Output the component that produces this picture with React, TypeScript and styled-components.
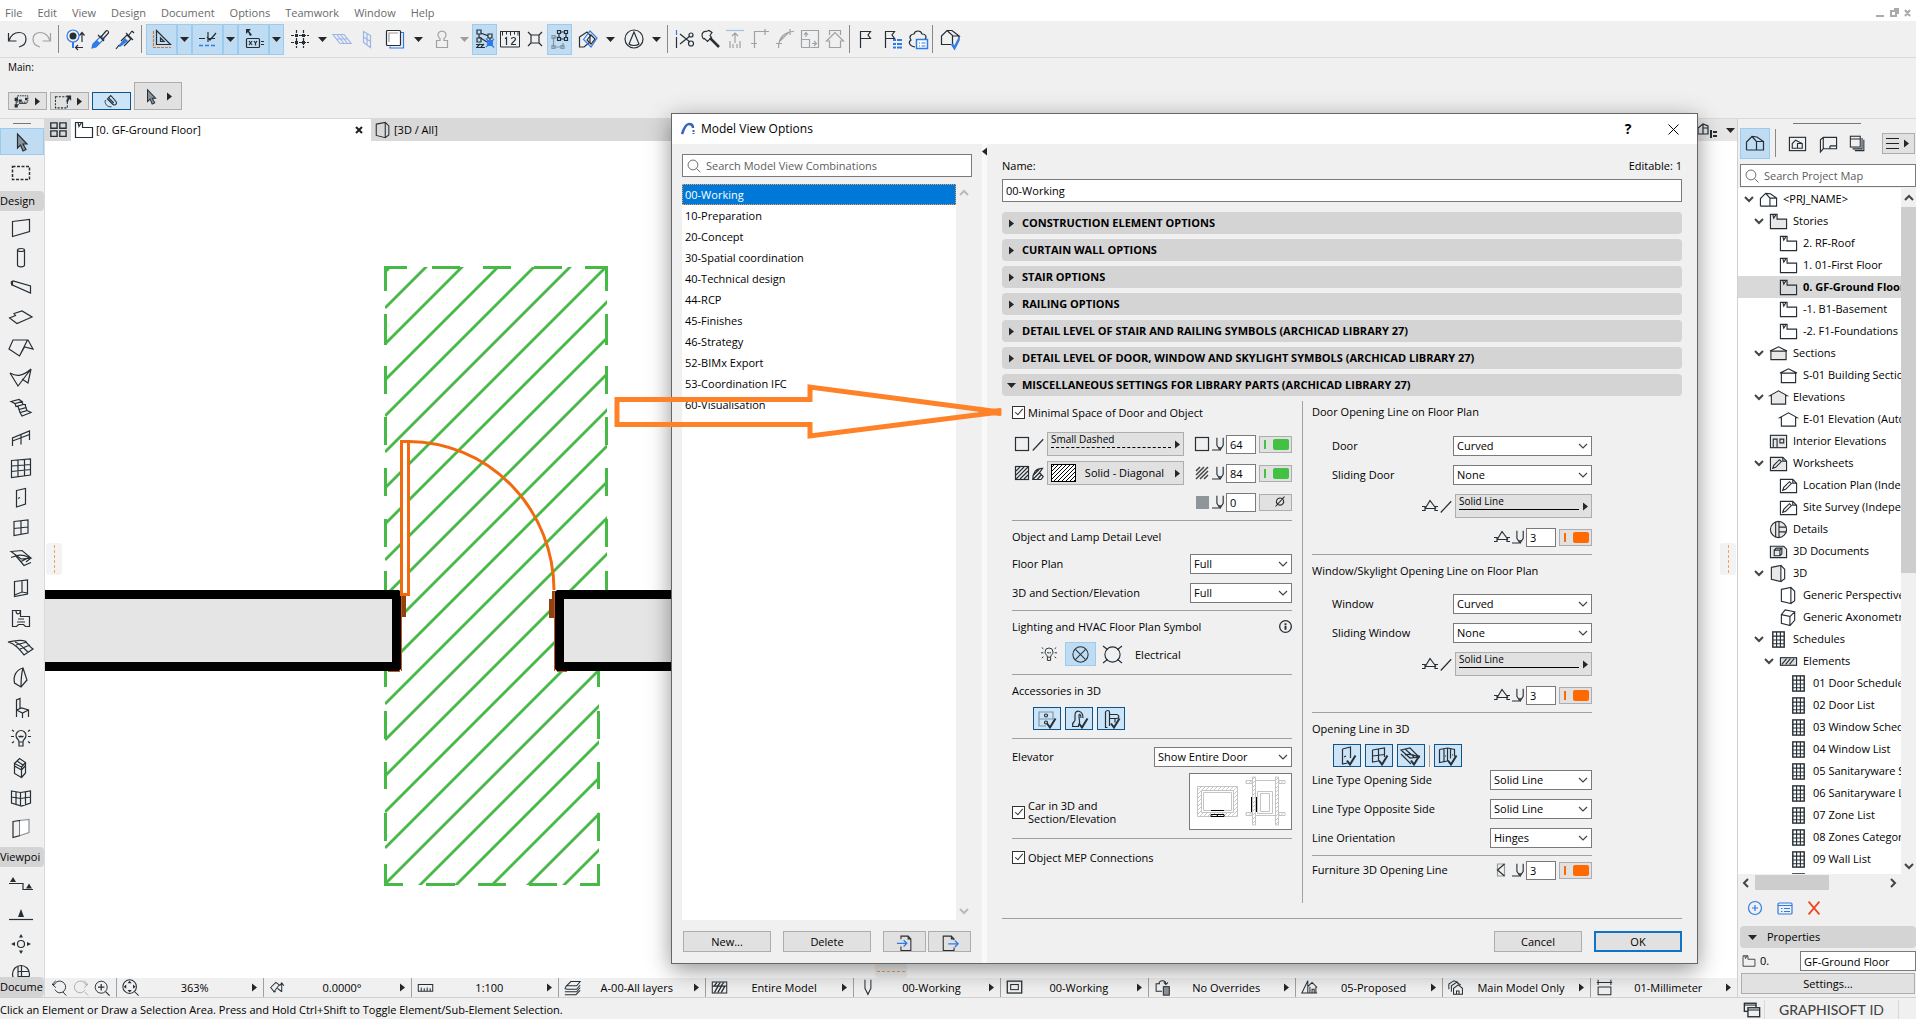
import React, { ReactNode } from 'react';
import styled, { createGlobalStyle, css } from 'styled-components';

const ink = '#262f36';
const blue = '#2f7bea';
const line = '#a0a0a0';
const orange = '#ff6a00';
const green = '#42c142';
const face = '#f0f0f0';

const Global = createGlobalStyle`
  *, *::before, *::after { box-sizing: border-box; }
  body { margin: 0; overflow: hidden; background: ${face}; }
  body, button, input, select {
    font-family: "Open Sans", "Noto Sans", sans-serif;
    font-size: 11px;
    line-height: 16px;
    color: #000;
  }
  button, input, select { margin: 0; padding: 0; border-radius: 0; }
  ul { margin: 0; padding: 0; list-style: none; }
  svg { display: block; flex: none; }
`;

/* ---------- icons: 20 x 20 line drawings ---------- */

const F = (d: string, c = 'currentColor') => <path d={d} fill={c} stroke="none" />;
const P = (d: string, c?: string, w?: number) => <path d={d} stroke={c} strokeWidth={w} />;
const check = P('M10 14.5l3 4 5.500-9', ink, 2);

const icons: Record<string, ReactNode> = {
  undo: P('M1.500 4v8h8M2 11.500C4 6 8 3.500 12 3.500c4 0 7 2.500 7 6.500 0 4-3 7-7 8'),
  redo: P('M18.500 4v8h-8M18 11.500C16 6 12 3.500 8 3.500c-4 0-7 2.500-7 6.500 0 4 3 7 7 8'),
  find: <><circle cx="8" cy="7" r="6" stroke={blue} /><circle cx="8" cy="7" r="3.500" fill={ink} stroke="none" />{P('M8 13v6', blue, 2)}{P('M17 13V4M14.500 6.500L17 3.500l2.500 3M18 18.500h-7M13 16l-2.500 2.500L13 21')}</>,
  dropper: <>{P('M2 19l1-4 8-8 3 3-8 8z', blue)}{F('M2 19l1-4 4-4 3 3-4 4z', blue)}{P('M8 6l6 6M11 8l5-6c1-1 3 0 2.500 2L13 10')}</>,
  syringe: <>{F('M3 17l7-8 3 3-8 6z', blue)}{P('M1 20l3-4M6 12l6-6 4 4-7 7M11 4l7 7M14 6l3-4M17 2l2 2')}</>,
  triangle: <>{P('M4.500 1.500v14h14z')}{P('M8.500 9v3.500H12z')}{P('M1.500 1v17.500H19', '#d9772b')}<path d="M1.500 1v17.500H19" stroke="#bfdcf3" strokeDasharray="1 3" /></>,
  snap: <>{P('M1 9.500h6M10 3v10M10 9.500h7M9 8l3 3 6-7')}<path d="M1 16.500h17" stroke={blue} strokeDasharray="4 2" strokeWidth="1.500" /></>,
  coords: <>{F('M2 0h5L5 2l3 4-2 1-2-4-2 2z')}<rect x="2.500" y="9.500" width="13" height="9" rx="1" />{P('M5 12l3 4M8 12l-3 4M10 12l1.500 2 1.500-2M11.500 14v2.500M17 12.500h3M17 15.500h3')}</>,
  grid: <><path d="M6.500 1v18M13.500 1v18M1 6.500h18M1 13.500h18" strokeDasharray="3 1" /><path d="M5 5h3v3H5zM12 5h3v3h-3zM5 12h3v3H5zM12 12h3v3h-3z" fill={ink} stroke="none" /></>,
  plane: P('M1 5.500h11l7 9H8zM4.500 10h11M5 5.500l7 9M8.500 5.500l7 9'),
  planeV: P('M6.500 2.500l7 4v12l-7-5zM10 4.500v12M6.500 8l7 4.500'),
  layers: <>{P('M5 17.500v1.500h13.500V3.500h-3', blue)}<rect x="1.500" y="1.500" width="14" height="15" rx="1" fill="#fff" /><path d="M4 13V4h9" stroke="#999" /></>,
  pawn: P('M8 9.500a4 4 0 1 1 4 0v2h3.500v7h-11v-7H8z'),
  suspend: <>{P('M4 2.500v9M4 3.500l11 4v4M4 8l8 5')}<path d="M2 1h4v4H2zM13 5h4v4h-4zM2 9h4v4H2z" fill="#bfdcf3" />{P('M1 18.500h9M1 15.500h8M2 18l3-3M6 18l3-3')}<path d="M12 11h6v6h-6z" fill={blue} stroke="none" />{P('M11 9.500l8 9M19 10l-8 8', blue)}</>,
  ruler: <><path d="M0 2.500h20M2.500 2.500v4M6.500 2.500v3M10.500 2.500v4M14.500 2.500v3M18 2.500v4M0.500 2v16h19V2" strokeWidth="1" />{P('M5 9.500l1.500-1v7.500M11.500 10c0-2 4-2 4 0 0 2-4 3.500-4 5.500h4.500')}</>,
  xbox: <>{P('M3 3l3 3M17 3l-3 3M3 17l3-3M17 17l-3-3M6 6h8v8H6z')}</>,
  group: <><path d="M3.500 8v10h10M3.500 8h4M13 18v-4" stroke="#7d97a8" /><path d="M2 6.500h3v3H2zM2 16.500h3v3H2zM11 16.500h3v3h-3z" stroke="#7d97a8" />{P('M9 3h7v7H9z')}<path d="M7.500 1.500h3v3h-3zM14.500 1.500h3v3h-3zM7.500 8.500h3v3h-3zM14.500 8.500h3v3h-3z" fill="#bfdcf3" /></>,
  house3d: <>{P('M1.500 8L9 3l3 3v7l-6 5H1.500z')}{P('M5.500 10.500L12 2l7 7-6 9z', blue)}{P('M9 11l4-5 4 4-4 5z')}</>,
  cone: <><circle cx="10" cy="10" r="9" />{P('M10 3l-5 12c2 2 8 2 10 0z')}</>,
  cut: <>{P('M2.500 1v5', blue)}{P('M2.500 8v11M6 5l10 8M6 15l10-8')}<circle cx="17" cy="6" r="2" /><circle cx="17" cy="14.500" r="2.500" /></>,
  axe: <>{P('M2 6c0-2 2-4 4-3.500l3-1 3 2-2 3 1.500 2-4 4-3-3c-1 1-2 0-2.500-3.500z')}{P('M10 9l9 9', ink, 2.500)}</>,
  extend: <>{P('M1 1.500h18', '#3f7ad6')}{P('M10 14V4M7 7l3-3 3 3M5 12v7M8 15v4M12 15v4M15 12v7')}</>,
  corner: P('M4.500 19V2.500H19M15 0v6M1 14.500h6'),
  fillet: P('M3.500 19C3.500 9 9 2.500 19 2.500M15 0v6M1 14.500h6M5 12l9-9'),
  resize: P('M1.500 18.500v-17h17v17h-8M1.500 10.500h8v8h-8M6 8V4M4 6l2-2.500L8 6M12 14.500h4M14 12l2.500 2.500L14 17'),
  homeUp: P('M4.500 6V1.500h11V6M1.500 12L10 3.500l8.500 8.500h-3v6.500h-11V12z'),
  flag: P('M4.500 19V2.500h10l-2.500 3.500 2.500 3.500h-10'),
  flagList: <>{P('M2.500 19V2.500h9l-2.500 3.500 2.500 3.500h-9')}<path d="M10 10h3v2h-3zM14 10h5v2h-5zM10 14h3v2h-3zM14 14h5v2h-5zM10 17.500h3v2h-3zM14 17.500h5v2h-5z" fill={blue} stroke="none" /></>,
  cloud: <>{P('M7 18C1 17 0 13 3 11 0 7 4 5 6 5c1-4 7-4 8 0 4 0 5 3 3 5')}<path d="M8.500 10.500h11v9h-11z" fill="#fff" stroke={blue} strokeWidth="1.500" />{P('M11 14h1M13.500 14h4M11 17h1M13.500 17h4', blue)}</>,
  homeCheck: <>{P('M11.500 15.500h-10V7L7 1.500l5 0 7 5.500h-6L7 1.500M12.500 7v8M19 7v3')}{P('M12 15l2.500 4L19 10', blue, 2.500)}</>,
  home: P('M1.500 17V9L7 3.500l5 .5 6.500 4.500V17h-17M11.500 17V8.500L7 3.500M11.500 8.500h7'),
  homeFrame: <><rect x="1.500" y="3.500" width="17" height="14" />{P('M4.500 15v-5L8 6.500l7 3.500v5zM10 15v-5h5')}</>,
  layout: P('M4.500 15.500h14v-12h-14L1.500 6v13l3-3.500v-12M11.500 12.500h7M11.500 12.500v3'),
  publish: <><rect x="1.500" y="2.500" width="11" height="12" />{P('M1.500 5.500h11M4 16.500h10.500v-12M6.500 18.500h10v-12')}</>,
  views: <><path d="M2 2h7v6H2zM12 2h7v6h-7zM2 11h7v6H2zM12 11h7v6h-7z" strokeWidth="1.500" /></>,
  story: <>{P('M1.500 2.500h7v5h10v10h-17z')}{P('M4 2.500l1 4 2.500-4')}</>,
  storyG: <><path d="M1.500 2.500h7v5h10v10h-17z" fill="#e8e8e8" />{P('M4 2.500l1 4 2.500-4')}</>,
  box3d: P('M2.500 3.500l10-2v17l-10-2.500zM12.500 1.500l4 4v10l-4 3'),
  box3dG: <><path d="M2.500 3.500l10-2v17l-10-2.500z" fill="#e8e8e8" />{P('M12.500 1.500l4 4v10l-4 3')}</>,
  boxAxo: P('M2.500 7l9 2v9.500l-9-2.500zM2.500 7l4-5 10 2-5 5M16.500 4v9l-5 5.500'),
  arrow: <path d="M6.500 2v14l3-3 2.500 6 3-1.500-3-5.500h4z" fill="#8b9299" />,
  marquee: <rect x="1.500" y="3.500" width="17" height="13" strokeDasharray="3 1.500" strokeWidth="1.500" />,
  wall: P('M1.500 3.500l17-2v12l-17 5z'),
  column: <><ellipse cx="10" cy="2" rx="3.500" ry="1.500" />{P('M6.500 2v15c0 2.500 7 2.500 7 0V2')}</>,
  beam: P('M0 4l2-1 17.500 5v7L1.500 7V3.500M0 4l1 3.500'),
  slab: P('M-1.500 10l6-2.500-1.500-2 8-2.500 10 6-15 6.500z'),
  roof: P('M-2 11l4-9h15l5 9-8.500-2-5 9zM16.500 2L8.500 18'),
  shell: P('M-1 5c7 4 13 3 21-4L7 18zM20 1l-3 14-6-4'),
  stair: P('M0 3.500l8-2 3 2-7 2zM4 5.500l1 3 7-2-1-3M5 8.500l3 0M12 6.500l3 0-1 0 1 3-7 2-1-3M15 9.500l1 3-7 2-1-3M16 12.500l4 2-9 3.500-2-3.500'),
  railing: P('M1.500 18v-8l17-7v9M1.500 13l17-6.500M10 6.500v10'),
  cwall: P('M0.500 2.500l19-1.500v16l-19 2.500zM7 2v16.500M13.500 1.500V18M0.500 8l19-1.500M0.500 13.500l19-2'),
  door: <>{P('M5.500 2.500l9-2v15.500l-9 3z')}{P('M7 10.500l2-1')}</>,
  window: P('M3 3.500l14-1.500v13l-14 2.500zM10 3v14M3 10.500l14-1.500'),
  skylight: P('M0 3.500l11-1L20 10l-10 1zM0 9.500c6-2 10-4 18-0l-8 4M5 8l8 9.500 7-3M20 10l-5 4'),
  opening: P('M3.500 3.500l13-1.500v14l-13 2.500zM11 3v11M3.500 17l7.500-3 5.500 1'),
  zone: P('M1.500 18.500v-16h8v6h9v10h-4l-2-2h-5l-2 2zM5 2.500c0 5 4 4 4.500 0M7 11h6M6 14h8'),
  mesh: P('M-3 4c7-1 12-3 17-1 3 3 5 6 8 8l-9 6C9 12 5 6-3 4zM5 7l11-3M9 11l10-4M4 4c6 2 9 7 13 10'),
  morph: P('M3.500 15C2 8 5 2 12 0l4 12-6 7zM12 0c-2 7-2 12-2 19M3.500 15l6.500 4'),
  chair: P('M5.500 19V2l3.500-1.500v10M5.500 12l5-2 7 2v7M5.500 12l6 3 6-3M11.500 15v5'),
  lamp: <>{P('M8 14c0-3-3-3-3-6.500a5 5 0 0 1 10 0C15 11 12 11 12 14zM8 14v4h4v-4M7.500 8l1.500 1 1-1 1 1 1.500-1')}{P('M1 2l2 1.500M0 8.500h3M1 15l2-1.500M19 2l-2 1.500M20 8.500h-3M19 15l-2-1.500')}</>,
  equip: P('M3.500 5.500l7 3.500v10.500l-7-4zM3.500 5.500l5-5 6 4-4 4.500M14.500 4.500V15l-4 4.500M3.500 8l7 4 4-4.500M6 3l6 4'),
  cwall2: P('M0.500 3l9 1.500 10-1.500v12l-9 3-10-3zM9.500 4.500V18M5 4v13M14.500 4v13M0.500 9l9 1.500 10-1.500'),
  panel: <>{P('M2 3.500l7-1v15l-7 2z')}<path d="M9 2.500l9-1v13l-9 3" stroke="#8b9299" fill="#fff" /></>,
  level: <>{P('M-2 9.500h14v6h10')}{F('M-1 8L2 3l3 5zM15 14.500l3-5 3 5z')}</>,
  section: <>{P('M-2 15.500h24')}{F('M7 13l3-8 3 8z')}</>,
  elev4: <><circle cx="10" cy="10" r="3.500" />{F('M8 3.500L10 0l2 3.500zM8 16.500L10 20l2-3.500zM4 8L0 10l4 2zM16 8L20 10l-4 2z')}</>,
  detail: <><circle cx="10" cy="10" r="8.500" />{P('M7 2v16M10.500 1.500v17M7 7.500h11M7 12.500h11')}</>,
  zoomBack: P('M6 1L1.500 5.500l4.500 4M1.500 5.500h3C6 2 9 1 12 1.500c9 2 8 14-1 14.500-3 0-5-2-6-4M15 15l4 4.500'),
  zoomFwd: P('M14 1l4.500 4.500-4.500 4M18.500 5.500h-3C14 2 11 1 8 1.500-1 3.500 0 15.500 9 16c3 0 5-2 6-4M15 15l4 4.500'),
  zoomIn: <><circle cx="9" cy="9" r="7.500" />{P('M14.500 14.500l5 5M9 5v8M5 9h8', undefined, 1.500)}</>,
  zoomFit: <><circle cx="9" cy="9" r="8" />{P('M15 15l4.500 4.500')}{F('M9 2l2.500 3h-5zM9 16l2.500-3h-5zM2 9l3-2.500v5zM16 9l-3-2.500v5z')}</>,
  rotate: P('M2 10l6-6 4 3-6 8zM5 15h3M15 15V5M12.500 8L15 4.500 17.500 8M10 11l5 4'),
  scale: P('M1.500 6.500h17v8h-17zM5 14v-4M8.500 14v-3M12 14v-4M15.500 14v-3'),
  stack: P('M3 8l5-5h11l-4 5zM1 11.500l3 .5h11l4-5M1 15h14l4-5M1 18.500h13l5-5M1 11.500L3 8'),
  model: <><rect x="1.500" y="3.500" width="17" height="13" /><path d="M1.500 8.500h17M4 8l3-4M8 8l3-4M12 8l3-4M4 16l4-7M8 16l4-7M12 16l4-7" strokeWidth="1.500" /></>,
  pen: P('M7 1v10l3.500 7 3.500-7V1M10.500 16v3'),
  frame: <><rect x="1.500" y="2.500" width="17" height="14" strokeWidth="1.500" /><rect x="5.500" y="6.500" width="9" height="6" /></>,
  override: <>{P('M7 5.500H2.500v9h7M6 5c0-4 8-4 8 1M11.500 4L14 6.500 16.500 4')}<rect x="11" y="9" width="7" height="10" fill="#8b9299" /></>,
  reno: P('M1 16.500L8 2v14.500zM8 9l5-5 6 6M10.500 16.500V9M17.500 16.500V9M8 16.500h11M13 16v-4h2.500v4'),
  homes: P('M6.500 18V11L12 7l5 4v7zM10 18v-4h3v4M4 15V8l6-4 5 3M1 12V6l6-4 5 2'),
  dims: P('M2.500 1v6M17.500 1v6M1 4h18M2.500 9.500h15v9h-15z'),
  quick: <>{P('M0 14V8l5-4 5 2v8zM5 14V8h5M5 8V4')}{P('M13 10v8M15 12h4M15 16h4', ink, 2)}</>,
  secG: <><path d="M2 7.500h16v9H2z" fill="#e8e8e8" />{P('M1 7.500L10 3l9 4.500')}</>,
  sec: <>{P('M2.500 7.500h15v10h-15zM1 7.500L10 3l9 4.500')}</>,
  elG: <path d="M2.500 17v-9L1 8l9-5 9 5-1.500 0v9z" fill="#e8e8e8" />,
  el: <path d="M2.500 17v-9L1 8l9-5 9 5-1.500 0v9z" fill="#fff" />,
  intEl: <><rect x="1.500" y="3.500" width="17" height="13" fill="#e8e8e8" />{P('M4.500 16V7.500h4V16M11.500 7.500h4v4h-4z')}</>,
  workG: <><path d="M1.500 3.500h13l4 4v10h-17z" fill="#e8e8e8" />{P('M14.500 3.500v4h4M4 15l1-3 6-6 2 2-6 6z')}</>,
  work: <>{P('M1.500 3.500h13l4 4v10h-17zM14.500 3.500v4h4M4 15l1-3 6-6 2 2-6 6z')}</>,
  details: <><circle cx="10" cy="10" r="8.500" fill="#e8e8e8" />{P('M7 2v16M10.500 1.500v17M10.500 7.500h8M10.500 12.500h8')}</>,
  doc3d: <><path d="M1.500 4.500h14l3 3v9h-17z" fill="#e8e8e8" />{P('M5.500 8.500h6v6h-6zM5.500 8.500l2-2h6l-2 2M13.500 6.500v6l-2 2')}</>,
  table: <><rect x="4" y="2" width="12" height="16" strokeWidth="1.500" />{P('M8 2v16M12 2v16M4 6.500h12M4 10.500h12M4 14.500h12')}</>,
  elements: <><rect x="1.500" y="6" width="17" height="8" fill="#ddd" />{P('M3 13l5-6M7 13l5-6M11 13l5-6')}</>,
  plus: <><circle cx="10" cy="10" r="6.500" />{P('M10 7v6M7 10h6')}</>,
  list: <><rect x="3" y="5" width="14" height="11" rx="1" />{P('M3 7.500h14M6 10.500h1.500M9 10.500h6M6 13.500h1.500M9 13.500h6')}</>,
  cross: P('M4 3l12 14M16 3L4 17', undefined, 2),
  glass: <><circle cx="8.500" cy="8.500" r="7" />{P('M13.500 13.500l5.500 5.500')}</>,
  importI: <>{P('M5.500 7V3.500h8l3 3v13h-11V15M13.500 3.500v3h3')}{P('M1 11.500h11M8.500 8l3.500 3.500L8.500 15', blue, 1.500)}</>,
  exportI: <>{P('M14.500 8V6.500l-3-3h-9v16h12V16M11.500 3.500v3h3')}{P('M8 12h11M15.500 8.500L19 12l-3.500 3.500', blue, 1.500)}</>,
  square: <rect x="3.500" y="3.500" width="13" height="13" />,
  slash: P('M1 18L15 3', undefined, 1.6),
  hatchSq: <><rect x="3.500" y="3.500" width="13" height="13" />{P('M4 8l4-4M4 12l8-8M4 16L16 4M8 16l8-8M12 16l4-4')}</>,
  hatchQ: P('M1 18C1 9 5 3 14 3l-4 6 5 5-3 4zM1 13l9-9M2 17l9-9M7 18l5-6', undefined, 1.6),
  hatch: P('M4 8l4-4M4 12l8-8M4 16L16 4M8 16l8-8M12 16l4-4', '#444', 1.5),
  solid: <rect x="4" y="4" width="13" height="13" fill="#8f969b" stroke="none" />,
  penLine: P('M7 1v11l4.500 7 4.500-7V1M9 15.500h5M0 18.500h10', undefined, 1.6),
  swing: P('M2 10.500h3v4H2M5 12.500h11M5.500 12L10 4.500l6 8M18 10.500h-3v4h3'),
  fold: <><path d="M5.500 4h7v12h-7z" stroke="#999" />{P('M12.500 4l-7 6 7 6')}</>,
  crossCircle: <><circle cx="10" cy="10" r="9" />{P('M4 4l12 12M16 4L4 16')}</>,
  circleRays: <><circle cx="10" cy="10" r="8" />{P('M0 1l5 4M20 1l-5 4M0 19l5-4M20 19l-5-4')}</>,
  info: <><circle cx="10" cy="10" r="9" strokeWidth="2" />{P('M10 9v6M10 5v2.500', undefined, 3)}</>,
  cabinet: <><path d="M2 3h14v7H2zM2 10v7h7" stroke="#7d97a8" /><circle cx="9" cy="6.500" r="1.500" /><circle cx="9" cy="13.500" r="1.500" />{check}</>,
  tap: <>{P('M4 17c-2-3 2-4 2-6V6c0-6 8-5 8 3M9 17c3-2 1-6 1-10 0-3 2-2 2 2M3 17.500h7')}{check}</>,
  roll: <>{P('M6.500 18.500h-2V3c1-2 4-2 4 0v14M8 5.500h8c3 1 2 4 0 4H8M14 9.500v4')}{check}</>,
  doorC: <>{P('M5.500 3l8-2v11M5.500 3v15l5-1M7 11l2-1')}{check}</>,
  windowC: <>{P('M3.500 4l12-2v9M3.500 4v12l6-1M9.500 3v12M3.500 10l12-1.500')}{check}</>,
  skyC: <>{P('M0 4l9-2 9 9-9 1zM4 9c5-2 9 0 14 2M0 8l10 10M4 3l9 8')}{check}</>,
  gateC: <>{P('M1.500 3.500l8-1.500 7 1.500v7M1.500 3.500v13l8-1.500M6 3v13M12.500 2.500v10M9.500 2V15M7 10h1M14 9h1')}{check}</>,
  empty: P('M5 15L15 4M10 5.500a4 4 0 1 0 .1 0'),
  magnet: <><path d="M4 6l8 8c3 2 6-1 4-4L9 2 6 5l7 7" strokeWidth="1.500" />{P('M2 8c-2 4 2 10 8 9')}</>,
  nodes: <>{P('M4 8v9l4-4h9')}<rect x="5.500" y="3.500" width="13" height="8" strokeDasharray="2 1" />{F('M2 6h4v4H2zM2 14h4v4H2zM15 6h3v3h-3zM7 8h4v3H7z')}</>,
  marqueeSel: <><rect x="0.500" y="4.500" width="14" height="13" strokeDasharray="2.500 1.500" />{F('M13 3h6v6l-2-2-2 4-2-1 2-4z')}</>,
  windows: <><rect x="1.500" y="2.500" width="13" height="9" strokeWidth="1.500" />{P('M1.500 4.500h13')}<rect x="5.500" y="7.500" width="13" height="10" fill={face} strokeWidth="1.500" />{P('M5.500 10h13')}</>,
};

type IconProps = { n: string; s?: number; c?: string };
const Icon = ({ n, s = 20, c = ink }: IconProps) => (
  <svg width={s} height={s} viewBox="0 0 20 20" fill="none" stroke="currentColor" strokeWidth={1.2} color={c} overflow="visible" aria-hidden>
    {icons[n]}
  </svg>
);

type Dir = 'right' | 'down' | 'left';
const Tri = ({ dir = 'right' }: { dir?: Dir }) => (
  <svg width="9" height="9" viewBox="0 0 9 9" fill="#262626" aria-hidden>
    <path d={dir === 'right' ? 'M2 0.500L7 4.500 2 8.500z' : dir === 'down' ? 'M0 2h9L4.500 7z' : 'M7 0.500L2 4.500 7 8.500z'} />
  </svg>
);
const Chevron = ({ dir = 'down', c = '#444', w = 1.2 }: { dir?: 'down' | 'up' | 'left' | 'right'; c?: string; w?: number }) => (
  <svg width="10" height="10" viewBox="0 0 10 10" fill="none" stroke={c} strokeWidth={w} aria-hidden>
    <path d={{ down: 'M1 3l4 4 4-4', up: 'M1 7l4-4 4 4', left: 'M7 1L3 5l4 4', right: 'M3 1l4 4-4 4' }[dir]} />
  </svg>
);

/* ---------- frame ---------- */

const Page = styled.div`
  height: 100vh;
  display: flex;
  flex-direction: column;
  overflow: hidden;
`;
const MenuBar = styled.nav`
  height: 21px;
  background: #fff;
  display: flex;
  align-items: center;
  padding: 5px 4px 0 5px;
  gap: 15px;
`;
const MenuItem = styled.button`
  border: 0;
  background: none;
  color: #6a6a6a;
`;
const WinControls = styled.div`
  margin-left: auto;
  display: flex;
`;
const ToolBar = styled.div`
  height: 37px;
  padding: 0 4px;
  display: flex;
  align-items: center;
  border-bottom: 1px solid #d9d9d9;
`;
const Tool = styled.button<{ $w?: number; $on?: boolean; $dim?: boolean }>`
  width: ${(p) => p.$w ?? 25}px;
  height: 31px;
  flex: none;
  display: flex;
  align-items: center;
  justify-content: center;
  border: 1px solid ${(p) => (p.$on ? '#9ccbee' : 'transparent')};
  background: ${(p) => (p.$on ? '#bfdcf3' : 'transparent')};
  opacity: ${(p) => (p.$dim ? 0.4 : 1)};
`;
const ToolSep = styled.span<{ $w: number }>`
  width: ${(p) => p.$w}px;
  height: 28px;
  flex: none;
  display: flex;
  justify-content: center;
  &::after { content: ''; width: 1px; background: #888; }
`;
const InfoBox = styled.div`
  height: 61px;
  display: flex;
  flex-direction: column;
  justify-content: space-between;
  padding: 2px 0 8px 8px;
  border-bottom: 1px solid #d9d9d9;
`;
const Tiny = styled.span`
  font-size: 10px;
  line-height: 14px;
`;
const InfoTools = styled.div`
  display: flex;
  align-items: flex-end;
  gap: 3px;
`;
const InfoTool = styled.button<{ $on?: boolean; $big?: boolean }>`
  width: ${(p) => (p.$big ? 48 : 39)}px;
  height: ${(p) => (p.$big ? 28 : 18)}px;
  display: flex;
  align-items: center;
  justify-content: space-evenly;
  border: 1px solid ${(p) => (p.$on ? '#10548c' : '#adadad')};
  background: ${(p) => (p.$on ? '#cce4f7' : '#e1e1e1')};
`;
const Middle = styled.div`
  flex: 1;
  min-height: 0;
  display: flex;
`;
const ToolBox = styled.aside`
  width: 45px;
  display: flex;
  flex-direction: column;
  border-right: 1px solid #d9d9d9;
`;
const ToolList = styled.div`
  flex: 1;
  min-height: 0;
  overflow: hidden;
  display: flex;
  flex-direction: column;
`;
const Handle = styled.span<{ $w: number }>`
  flex: none;
  height: 9px;
  display: flex;
  align-items: center;
  justify-content: center;
  &::after { content: ''; width: ${(p) => p.$w}px; height: 1px; background: #777; }
`;
const BoxTool = styled.button<{ $h?: number; $on?: boolean }>`
  flex: none;
  height: ${(p) => p.$h ?? 30}px;
  display: flex;
  align-items: center;
  justify-content: center;
  padding-right: 2px;
  border: 1px solid ${(p) => (p.$on ? '#9ccbee' : 'transparent')};
  background: ${(p) => (p.$on ? '#bfdcf3' : 'transparent')};
`;
const BoxHead = styled.div<{ $top?: number }>`
  flex: none;
  height: 20px;
  margin: ${(p) => p.$top ?? 0}px 0 2px;
  padding-top: 2px;
  white-space: nowrap;
  overflow: hidden;
  background: #d4d4d4;
  border-radius: 0 4px 4px 0;
  &:last-child { margin: 0; }
`;
const Work = styled.main`
  flex: 1;
  min-width: 0;
  display: flex;
  flex-direction: column;
`;
const Tabs = styled.div`
  height: 22px;
  display: flex;
  background: #d9d9d9;
`;
const TabGrid = styled.button`
  width: 26px;
  border: 0;
  background: none;
  display: flex;
  align-items: center;
  justify-content: center;
`;
const Tab = styled.div<{ $on?: boolean }>`
  width: 300px;
  display: flex;
  align-items: center;
  gap: 2px;
  padding: 0 8px 0 3px;
  background: ${(p) => (p.$on ? '#fff' : 'transparent')};
`;
const TabClose = styled.button`
  margin-left: auto;
  border: 0;
  background: none;
`;
const TabEnd = styled.div`
  margin-left: auto;
  padding-right: 2px;
  display: flex;
  align-items: center;
  gap: 8px;
  background: #e6e6e6;
`;
const Canvas = styled.div`
  position: relative;
  flex: 1;
  min-height: 0;
  overflow: hidden;
  background: #fff;
`;
const Grip = styled.span<{ $side: 'left' | 'right' | 'bottom' }>`
  position: absolute;
  background: #f3f3f3;
  border-radius: 3px;
  display: flex;
  align-items: center;
  justify-content: center;
  ${(p) =>
    p.$side === 'bottom'
      ? css`left: 830px; bottom: 0; width: 32px; height: 14px;
          &::after { content: ''; width: 28px; border-top: 1px dashed #f2a25c; }`
      : css`${p.$side}: 1px; top: 402px; width: 16px; height: 32px;
          &::after { content: ''; height: 28px; border-left: 1px dashed #f2a25c; }`}
`;
const QuickBar = styled.div`
  height: 19px;
  display: flex;
`;
const ZoomTools = styled.div`
  width: 71px;
  display: flex;
  align-items: center;
  justify-content: space-evenly;
`;
const Quick = styled.button`
  flex: 1;
  min-width: 0;
  display: flex;
  align-items: center;
  gap: 6px;
  padding: 0 4px 0 5px;
  border: 0;
  border-left: 1px solid ${line};
  background: none;
  white-space: nowrap;
`;
const Grow = styled.span`
  flex: 1;
  text-align: center;
`;
const StatusBar = styled.footer`
  height: 22px;
  display: flex;
  align-items: center;
  padding-top: 2px;
  border-top: 1px solid #d0d0d0;
`;
const BrandBox = styled.div`
  margin-left: auto;
  width: 173px;
  display: flex;
  align-items: center;
`;
const Brand = styled.span`
  margin-left: 3px;
  padding: 0 14px;
  border: solid #d9d9d9;
  border-width: 0 1px;
  font-family: Lato, sans-serif;
  font-size: 14px;
  line-height: 19px;
  color: #444;
  b { font-weight: 500; }
`;

/* ---------- navigator ---------- */

const Navigator = styled.aside`
  width: 179px;
  display: flex;
  flex-direction: column;
  border-left: 1px solid #d0d0d0;
`;
const NavTools = styled.div`
  height: 30px;
  display: flex;
  align-items: center;
  padding: 0 1px 0 2px;
`;
const NavMenu = styled.button`
  margin-left: auto;
  width: 33px;
  height: 21px;
  display: flex;
  align-items: center;
  justify-content: space-evenly;
  border: 1px solid #adadad;
  background: #e1e1e1;
`;
const SearchBox = styled.label`
  flex: none;
  height: 23px;
  display: flex;
  align-items: center;
  gap: 5px;
  padding-left: 4px;
  border: 1px solid #7a7a7a;
  background: #fff;
  input {
    flex: 1;
    min-width: 0;
    border: 0;
    outline: 0;
    background: none;
  }
  input::placeholder { color: #5c5c5c; opacity: 1; }
`;
const NavSearch = styled.div`
  margin: 6px 0 1px 2px;
`;
const TreeArea = styled.div`
  flex: 1;
  min-height: 0;
  display: flex;
`;
const Tree = styled.ul`
  flex: 1;
  min-width: 0;
  overflow: hidden;
  background: #fff;
`;
const Row = styled.li<{ $level: number; $on?: boolean }>`
  height: 22px;
  display: grid;
  grid-template-columns: 14px 20px 1fr;
  align-items: center;
  padding-left: ${(p) => 6 + p.$level * 10}px;
  column-gap: 1px;
  white-space: nowrap;
  background: ${(p) => (p.$on ? '#d9d9d9' : 'transparent')};
  font-weight: ${(p) => (p.$on ? 700 : 400)};
  & > span { padding-left: 3px; }
`;
const VScroll = styled.div`
  width: 15px;
  display: flex;
  flex-direction: column;
  align-items: center;
  gap: 4px;
  padding: 5px 0 3px;
`;
const VThumb = styled.span`
  width: 15px;
  flex: 0 1 54%;
  margin-bottom: auto;
  background: #cdcdcd;
`;
const HScroll = styled.div`
  height: 17px;
  display: flex;
  align-items: center;
  gap: 4px;
  padding: 1px 18px 1px 3px;
`;
const HThumb = styled.span`
  width: 74px;
  height: 15px;
  margin-right: auto;
  background: #cdcdcd;
`;
const NavActions = styled.div`
  height: 35px;
  display: flex;
  align-items: center;
  gap: 10px;
  padding: 0 0 2px 7px;
  button { border: 0; background: none; }
`;
const NavHead = styled.div`
  height: 22px;
  margin: 0 0 3px 2px;
  padding-left: 8px;
  display: flex;
  align-items: center;
  gap: 10px;
  background: #d4d4d4;
  border-radius: 4px;
`;
const NavProp = styled.label`
  display: grid;
  grid-template-columns: 18px 40px 1fr;
  align-items: center;
  padding-left: 4px;
`;
const TextBox = styled.input<{ $h?: number }>`
  width: 100%;
  min-width: 0;
  height: ${(p) => p.$h ?? 20}px;
  padding: 0 3px;
  border: 1px solid #7a7a7a;
  background: #fff;
  outline: 0;
`;
const Button = styled.button<{ $w?: number; $main?: boolean }>`
  width: ${(p) => (p.$w ? p.$w + 'px' : 'auto')};
  height: 21px;
  display: flex;
  align-items: center;
  justify-content: center;
  border: ${(p) => (p.$main ? '2px solid #0f74c8' : '1px solid #adadad')};
  background: #e1e1e1;
`;
const Settings = styled(Button)`
  margin: 2px 1px 3px 3px;
`;

/* ---------- dialog ---------- */

const Dialog = styled.section`
  position: absolute;
  left: 671px;
  top: 113px;
  width: 1027px;
  border: 1px solid #666;
  background: ${face};
  box-shadow: 0 6px 22px rgba(0, 0, 0, 0.42);
`;
const TitleBar = styled.header`
  height: 30px;
  display: flex;
  align-items: center;
  gap: 6px;
  padding: 0 16px 0 9px;
  background: #fff;
  font-size: 12px;
`;
const TitleButton = styled.button<{ $push?: boolean }>`
  width: 16px;
  display: flex;
  justify-content: center;
  margin-left: ${(p) => (p.$push ? 'auto' : '23px')};
  border: 0;
  background: none;
  font-size: 14px;
`;
const Body = styled.div`
  display: flex;
`;
const ListPane = styled.div`
  width: 310px;
  padding: 10px 10px 11px;
  display: flex;
  flex-direction: column;
`;
const Splitter = styled.div`
  width: 5px;
  padding-top: 3px;
  display: flex;
  justify-content: center;
  background: #f9f9f9;
`;
const ListArea = styled.div`
  flex: 1;
  display: flex;
  margin: 7px 0 11px;
`;
const List = styled.ul`
  flex: 1;
  background: #fff;
`;
const Option = styled.button<{ $on?: boolean }>`
  width: 100%;
  height: 21px;
  padding: 1px 0 0 2px;
  text-align: left;
  border: 1px ${(p) => (p.$on ? 'dotted #f0a050' : 'solid transparent')};
  background: ${(p) => (p.$on ? '#0078d7' : 'none')};
  color: ${(p) => (p.$on ? '#fff' : '#000')};
`;
const ListScroll = styled.div`
  width: 16px;
  display: flex;
  flex-direction: column;
  align-items: center;
  justify-content: space-between;
  padding: 4px 0;
`;
const ListButtons = styled.div`
  display: flex;
  gap: 12px;
  padding: 0 1px;
`;
const ButtonPair = styled.div`
  display: flex;
  gap: 2px;
`;
const FormPane = styled.div`
  flex: 1;
  min-width: 0;
  padding: 12px 15px 11px;
`;
const NameRow = styled.div`
  display: flex;
  justify-content: space-between;
  padding-bottom: 3px;
  line-height: 20px;
`;
const Bars = styled.div`
  display: grid;
  gap: 5px;
  margin-top: 10px;
`;
const Bar = styled.button`
  height: 22px;
  display: flex;
  align-items: center;
  gap: 6px;
  padding-left: 5px;
  border: 0;
  border-radius: 4px;
  background: #d4d4d4;
  font-weight: 700;
`;
const Columns = styled.div`
  display: grid;
  grid-template-columns: 300px 300px;
  min-height: 502px;
  margin: 5px 0 15px;
`;
const Column = styled.div<{ $right?: boolean }>`
  padding: ${(p) => (p.$right ? '0 10px 0 9px' : '0 10px')};
  border-left: ${(p) => (p.$right ? `1px solid ${line}` : 0)};
`;
const Stack = styled.div<{ $gap?: number; $top?: number; $bottom?: number }>`
  display: flex;
  flex-direction: column;
  gap: ${(p) => p.$gap ?? 9}px;
  padding: ${(p) => p.$top ?? 0}px 0 ${(p) => p.$bottom ?? 7}px;
`;
const Head = styled.div<{ $first?: boolean }>`
  height: ${(p) => (p.$first ? 22 : 26)}px;
  padding-top: ${(p) => (p.$first ? 0 : 5)}px;
  display: flex;
  align-items: center;
  justify-content: space-between;
`;
const Rule = styled.hr`
  margin: 0;
  border: 0;
  border-top: 1px solid ${line};
`;
const Field = styled.div<{ $indent?: boolean; $tall?: boolean }>`
  min-height: ${(p) => (p.$tall ? 24 : 20)}px;
  display: flex;
  align-items: center;
  justify-content: space-between;
  padding-left: ${(p) => (p.$indent ? 20 : 0)}px;
`;
const End = styled.div`
  margin-left: auto;
  display: flex;
  align-items: center;
`;
const Check = styled.label`
  display: flex;
  align-items: center;
  gap: 3px;
  min-height: 22px;
  line-height: 13px;
  input {
    appearance: none;
    width: 13px;
    height: 13px;
    flex: none;
    display: grid;
    place-items: center;
    border: 1px solid #333;
    background: #fff;
  }
  input:checked::after {
    content: '';
    width: 4px;
    height: 8px;
    margin-bottom: 2px;
    border: solid #333;
    border-width: 0 1px 1px 0;
    transform: rotate(40deg);
  }
`;
const SelectWrap = styled.span<{ $w: number }>`
  width: ${(p) => p.$w}px;
  display: grid;
  align-items: center;
  & > * { grid-area: 1 / 1; }
  select {
    appearance: none;
    width: 100%;
    height: 20px;
    padding: 0 16px 0 3px;
    border: 1px solid #7a7a7a;
    background: #fff;
    outline: 0;
  }
  svg { justify-self: end; margin-right: 4px; pointer-events: none; }
`;
const PickButton = styled.button`
  width: 137px;
  height: 24px;
  flex: none;
  display: flex;
  align-items: center;
  justify-content: space-between;
  padding: 0 1px 0 3px;
  border: 1px solid #adadad;
  background: #e1e1e1;
`;
const LineSample = styled.span<{ $dashed?: boolean }>`
  width: 120px;
  display: block;
  text-align: left;
  font-size: 10px;
  line-height: 12px;
  padding-bottom: 2px;
  margin-bottom: 7px;
  border-bottom: 1px ${(p) => (p.$dashed ? 'dashed' : 'solid')} #000;
`;
const PenInput = styled(TextBox)`
  width: 30px;
  height: 19px;
  margin-right: 3px;
`;
const ColorButton = styled.button<{ $c?: string }>`
  width: 33px;
  height: 17px;
  display: flex;
  align-items: center;
  justify-content: ${(p) => (p.$c ? 'space-between' : 'flex-end')};
  padding: 0 2px 0 4px;
  border: 1px solid #adadad;
  background: #e1e1e1;
  &::before {
    content: '';
    display: ${(p) => (p.$c ? 'block' : 'none')};
    width: 2px;
    height: 9px;
    background: ${(p) => p.$c};
  }
  &::after {
    content: '';
    display: ${(p) => (p.$c ? 'block' : 'none')};
    width: 16px;
    height: 11px;
    border-radius: 2px;
    background: ${(p) => p.$c};
  }
`;
const IconRow = styled.div<{ $gap: number }>`
  display: flex;
  align-items: center;
  gap: ${(p) => p.$gap}px;
  padding-left: 21px;
`;
const Toggle = styled.button`
  width: 28px;
  height: 23px;
  display: flex;
  align-items: center;
  justify-content: center;
  border: 1px solid #10548c;
  background: #cce4f7;
`;
const SymbolButton = styled.button<{ $on?: boolean }>`
  width: 31px;
  height: 24px;
  display: flex;
  align-items: center;
  justify-content: center;
  border: 1px solid ${(p) => (p.$on ? '#9ccbee' : 'transparent')};
  background: ${(p) => (p.$on ? '#bfdcf3' : 'none')};
`;
const SymbolName = styled.span`
  padding: 2px 0 0 6px;
`;
const ToggleSep = styled.span`
  width: 1px;
  height: 22px;
  background: ${line};
`;
const Lift = styled.div`
  display: grid;
  grid-template-columns: 1fr 103px;
`;
const LiftCheck = styled.div`
  padding-top: 26px;
`;
const Preview = styled.div`
  height: 57px;
  border: 1px solid #7a7a7a;
  background: #fff;
`;
const Footer = styled.div`
  display: flex;
  justify-content: flex-end;
  gap: 12px;
  padding-top: 12px;
  border-top: 1px solid ${line};
`;
const Pointer = styled.svg`
  position: absolute;
  left: 610px;
  top: 380px;
  pointer-events: none;
`;

const Select = ({ w, value, label, opts = [] }: { w: number; value: string; label: string; opts?: string[] }) => (
  <SelectWrap $w={w}>
    <select aria-label={label} defaultValue={value}>
      {[value, ...opts].map((o) => <option key={o}>{o}</option>)}
    </select>
    <Chevron />
  </SelectWrap>
);
const PenField = ({ icon, pen, color, label }: { icon: string; pen: string; color?: string; label: string }) => (
  <End>
    <Icon n={icon} />
    <Icon n="penLine" s={14} />
    <PenInput aria-label={label} defaultValue={pen} />
    <ColorButton $c={color} aria-label={`${label} colour`}>{!color && <Icon n="empty" s={18} />}</ColorButton>
  </End>
);
const LinePick = ({ label }: { label: string }) => (
  <Field>
    <End>
      <Icon n="swing" />
      <Icon n="slash" s={15} />
      <PickButton aria-label={label}><LineSample>Solid Line</LineSample><Tri /></PickButton>
    </End>
  </Field>
);

/* ---------- floor plan drawing ---------- */

const hatchLines = Array.from({ length: 23 }, (_, k) => 272 + 36 * k);
const leftDashes = [[266, 291], [314, 345], [366, 394], [417, 445], [468, 496], [519, 547], [571, 590], [660, 687], [711, 739], [762, 789], [813, 841], [864, 886]];
const rightUpper = leftDashes.slice(0, 7);
const rightLower = leftDashes.slice(7);
const topDashes = [[384, 407], [432, 460], [483, 511], [534, 562], [585, 607]];
const bottomDashes = [[384, 403], [426, 455], [478, 506], [529, 557], [580, 599]];
const vDash = (x: number, a: number[][]) => a.map(([p, q]) => `M${x} ${p}V${q}`).join('');
const hDash = (y: number, a: number[][]) => a.map(([p, q]) => `M${p} ${y}H${q}`).join('');

const Plan = () => (
  <svg width="1700" height="860" fill="none" aria-label="Floor plan">
    <defs>
      <clipPath id="zone"><path d="M385 267H607V640H599V885H385z" /></clipPath>
    </defs>
    <g transform="translate(-45 -141)">
      <g stroke="#46b946" strokeWidth="2.800" clipPath="url(#zone)">
        {hatchLines.map((y) => <path key={y} d={`M385 ${y}l230-230`} />)}
      </g>
      <path stroke="#46b946" strokeWidth="3" d={vDash(385.5, leftDashes) + vDash(606.5, rightUpper) + vDash(598.5, rightLower) + hDash(267.5, topDashes) + hDash(884.5, bottomDashes)} />
      <path d="M401 595h5v22h-5zM549 599h6v19h-6zM552 591h4v10h-4z" fill="#93420f" />
      <path d="M401.500 592V671M388 671.500h12M554.500 592V671M557 671.500h10" stroke="#c4581a" />
      <path d="M45 590H399l2 2V669l-2 2H45z" fill="#000" />
      <path d="M45 599H392V662H45z" fill="#e5e5e5" />
      <path d="M557 590H800V671H557l-2-2V592z" fill="#000" />
      <path d="M564 599H800V662H564z" fill="#e5e5e5" />
      <path d="M401.500 441.500h7v153h-7z" fill="#fff" stroke="#f26a10" strokeWidth="3" />
      <path d="M409 441.500A146 149 0 0 1 554 590" stroke="#f26a10" strokeWidth="3" />
    </g>
  </svg>
);

const LiftDrawing = () => (
  <svg width="101" height="55" viewBox="0 0 101 55" fill="none" stroke="#c4c4c4" aria-hidden>
    <defs>
      <pattern id="brick" width="4" height="4" patternUnits="userSpaceOnUse"><path d="M-1 1l2-2M0 4l4-4M3 5l2-2" stroke="#c8c8c8" /></pattern>
    </defs>
    <path d="M7.500 12.500h40v30h-40zM11.500 16.500v22h32v-22z" fill="url(#brick)" fillRule="evenodd" />
    <path d="M13.500 18.500h28v18h-28z" />
    <path d="M62.500 3v48h3V3zM85.500 3v48h3V3zM56 6.500h6v3h-6zM89 6.500h6v3h-6zM56 38.500h6v3h-6zM89 38.500h6v3h-6z" fill="url(#brick)" />
    <path d="M66 6.500h19M67.500 17.500h15v22h-15zM70.500 19.500h9v18h-9zM66 41.500h19" />
    <path d="M21 36.500h13M21 40.500h13v2H21zM27.500 40v3M61.500 23v15M66.500 23v15" stroke="#000" />
  </svg>
);

type T = { i?: string; w?: number; on?: boolean; dim?: boolean; caret?: boolean; sep?: boolean };
const tools: T[] = [
  { i: 'undo', w: 26 }, { i: 'redo', w: 24, dim: true }, { sep: true, w: 8 },
  { i: 'find' }, { i: 'dropper' }, { i: 'syringe' }, { sep: true, w: 9 },
  { i: 'triangle', w: 31, on: true }, { caret: true, on: true }, { i: 'snap', w: 31, on: true }, { caret: true, on: true },
  { i: 'coords', w: 31, on: true }, { caret: true, on: true }, { i: 'grid', w: 31 }, { caret: true },
  { i: 'plane', w: 24, dim: true }, { i: 'planeV', dim: true }, { i: 'layers', w: 32 }, { caret: true },
  { i: 'pawn', w: 31, dim: true }, { caret: true, dim: true }, { i: 'suspend', on: true }, { i: 'ruler' }, { i: 'xbox' },
  { i: 'group', on: true }, { i: 'house3d', w: 31 }, { caret: true }, { i: 'cone', w: 31 }, { caret: true }, { sep: true, w: 7 },
  { i: 'cut', w: 26 }, { i: 'axe' }, { i: 'extend', dim: true }, { i: 'corner', dim: true }, { i: 'fillet', dim: true },
  { i: 'resize', dim: true }, { i: 'homeUp', dim: true }, { sep: true, w: 5 }, { i: 'flag', w: 28 }, { i: 'flagList' }, { i: 'cloud' },
  { sep: true, w: 5 }, { i: 'homeCheck', w: 30 },
];
const planeTint: Record<string, string> = { plane: '#1f62d8', planeV: '#1f62d8' };

const designTools = ['wall', 'column', 'beam', 'slab', 'roof', 'shell', 'stair', 'railing', 'cwall', 'door', 'window', 'skylight', 'opening', 'zone', 'mesh', 'morph', 'chair', 'lamp', 'equip', 'cwall2', 'panel'];
const viewTools = ['level', 'section', 'elev4', 'detail'];
const quick = [
  ['zoomFit', '363%'], ['rotate', '0.0000°'], ['scale', '1:100'], ['stack', 'A-00-All layers'], ['model', 'Entire Model'], ['pen', '00-Working'],
  ['frame', '00-Working'], ['override', 'No Overrides'], ['reno', '05-Proposed'], ['homes', 'Main Model Only'], ['dims', '01-Millimeter'],
];
const tree: [number, boolean, string, string, boolean?][] = [
  [0, true, 'home', '<PRJ_NAME>'], [1, true, 'storyG', 'Stories'], [2, false, 'story', '2. RF-Roof'], [2, false, 'story', '1. 01-First Floor'],
  [2, false, 'story', '0. GF-Ground Floor', true], [2, false, 'story', '-1. B1-Basement'], [2, false, 'story', '-2. F1-Foundations'],
  [1, true, 'secG', 'Sections'], [2, false, 'sec', 'S-01 Building Section'], [1, true, 'elG', 'Elevations'], [2, false, 'el', 'E-01 Elevation (Auto)'],
  [1, false, 'intEl', 'Interior Elevations'], [1, true, 'workG', 'Worksheets'], [2, false, 'work', 'Location Plan (Independent)'],
  [2, false, 'work', 'Site Survey (Independent)'], [1, false, 'details', 'Details'], [1, false, 'doc3d', '3D Documents'], [1, true, 'box3dG', '3D'],
  [2, false, 'box3d', 'Generic Perspective'], [2, false, 'boxAxo', 'Generic Axonometry'], [1, true, 'table', 'Schedules'], [2, true, 'elements', 'Elements'],
  [3, false, 'table', '01 Door Schedule'], [3, false, 'table', '02 Door List'], [3, false, 'table', '03 Window Schedule'], [3, false, 'table', '04 Window List'],
  [3, false, 'table', '05 Sanitaryware Schedule'], [3, false, 'table', '06 Sanitaryware List'], [3, false, 'table', '07 Zone List'],
  [3, false, 'table', '08 Zones Category'], [3, false, 'table', '09 Wall List'], [3, false, 'table', ''],
];
const combos = ['00-Working', '10-Preparation', '20-Concept', '30-Spatial coordination', '40-Technical design', '44-RCP', '45-Finishes', '46-Strategy', '52-BIMx Export', '53-Coordination IFC', '60-Visualisation'];
const bars = ['CONSTRUCTION ELEMENT OPTIONS', 'CURTAIN WALL OPTIONS', 'STAIR OPTIONS', 'RAILING OPTIONS', 'DETAIL LEVEL OF STAIR AND RAILING SYMBOLS (ARCHICAD LIBRARY 27)', 'DETAIL LEVEL OF DOOR, WINDOW AND SKYLIGHT SYMBOLS (ARCHICAD LIBRARY 27)', 'MISCELLANEOUS SETTINGS FOR LIBRARY PARTS (ARCHICAD LIBRARY 27)'];

const OpeningGroup = ({ title, first, second, lead }: { title: string; first: string; second: string; lead?: boolean }) => (
  <>
    <Head $first={lead}>{title}</Head>
    <Stack $top={13}>
      <Field $indent><span>{first}</span><Select w={139} label={first} value="Curved" opts={['Straight', 'None']} /></Field>
      <Field $indent><span>{second}</span><Select w={139} label={second} value="None" opts={['Curved', 'Straight']} /></Field>
      <LinePick label={`${title} type`} />
      <Field><PenField icon="swing" pen="3" color={orange} label={`${title} pen`} /></Field>
    </Stack>
    <Rule />
  </>
);

const LibraryPartSettings = () => (
  <Columns>
    <Column>
      <Check><input type="checkbox" defaultChecked />Minimal Space of Door and Object</Check>
      <Stack $gap={5} $top={9} $bottom={6}>
        <Field $tall>
          <Icon n="square" /><Icon n="slash" s={15} />
          <PickButton aria-label="Line type"><LineSample $dashed>Small Dashed</LineSample><Tri /></PickButton>
          <PenField icon="square" pen="64" color={green} label="Line pen" />
        </Field>
        <Field $tall>
          <Icon n="hatchSq" /><Icon n="hatchQ" s={15} />
          <PickButton>
            <svg width="25" height="18" aria-hidden>
              <defs><pattern id="diag" width="4" height="4" patternUnits="userSpaceOnUse"><path d="M-1 1l2-2M0 4l4-4M3 5l2-2" stroke="#000" /></pattern></defs>
              <rect x="0.500" y="0.500" width="24" height="17" fill="#fff" /><rect x="0.500" y="0.500" width="24" height="17" fill="url(#diag)" stroke="#000" />
            </svg>
            Solid - Diagonal<Tri />
          </PickButton>
          <PenField icon="hatch" pen="84" color={green} label="Fill pen" />
        </Field>
        <Field $tall><PenField icon="solid" pen="0" label="Background pen" /></Field>
      </Stack>
      <Rule />
      <Head>Object and Lamp Detail Level</Head>
      <Stack $top={7}>
        <Field>Floor Plan<Select w={102} label="Floor Plan" value="Full" opts={['Simple']} /></Field>
        <Field>3D and Section/Elevation<Select w={102} label="3D and Section/Elevation" value="Full" opts={['Simple']} /></Field>
      </Stack>
      <Rule />
      <Head>Lighting and HVAC Floor Plan Symbol<Icon n="info" s={13} /></Head>
      <Stack $top={5} $bottom={8}>
        <IconRow $gap={1}>
          <SymbolButton aria-label="Lamp"><Icon n="lamp" s={16} /></SymbolButton>
          <SymbolButton $on aria-label="Electrical symbol"><Icon n="crossCircle" s={17} /></SymbolButton>
          <SymbolButton aria-label="Round"><Icon n="circleRays" s={19} /></SymbolButton>
          <SymbolName>Electrical</SymbolName>
        </IconRow>
      </Stack>
      <Rule />
      <Head>Accessories in 3D</Head>
      <Stack $top={6} $bottom={8}>
        <IconRow $gap={4}>
          {['cabinet', 'tap', 'roll'].map((n) => <Toggle key={n} aria-label={n}><Icon n={n} /></Toggle>)}
        </IconRow>
      </Stack>
      <Rule />
      <Stack $gap={6} $top={8} $bottom={8}>
        <Field>Elevator<Select w={138} label="Elevator" value="Show Entire Door" opts={['Hide Door']} /></Field>
        <Lift>
          <LiftCheck><Check><input type="checkbox" defaultChecked /><span>Car in 3D and<br />Section/Elevation</span></Check></LiftCheck>
          <Preview><LiftDrawing /></Preview>
        </Lift>
      </Stack>
      <Rule />
      <Stack $top={7}><Check><input type="checkbox" defaultChecked />Object MEP Connections</Check></Stack>
    </Column>
    <Column $right>
      <OpeningGroup lead title="Door Opening Line on Floor Plan" first="Door" second="Sliding Door" />
      <OpeningGroup title="Window/Skylight Opening Line on Floor Plan" first="Window" second="Sliding Window" />
      <Head>Opening Line in 3D</Head>
      <Stack $top={5} $gap={3} $bottom={0}>
        <IconRow $gap={4}>
          {['doorC', 'windowC', 'skyC'].map((n) => <Toggle key={n} aria-label={n}><Icon n={n} /></Toggle>)}
          <ToggleSep />
          <Toggle aria-label="gate"><Icon n="gateC" /></Toggle>
        </IconRow>
        <Stack>
          <Field>Line Type Opening Side<Select w={102} label="Line Type Opening Side" value="Solid Line" /></Field>
          <Field>Line Type Opposite Side<Select w={102} label="Line Type Opposite Side" value="Solid Line" /></Field>
          <Field>Line Orientation<Select w={102} label="Line Orientation" value="Hinges" /></Field>
        </Stack>
      </Stack>
      <Rule />
      <Stack $top={4}>
        <Field>Furniture 3D Opening Line<PenField icon="fold" pen="3" color={orange} label="Furniture pen" /></Field>
      </Stack>
    </Column>
  </Columns>
);

const ModelViewOptions = () => (
  <Dialog role="dialog" aria-label="Model View Options">
    <TitleBar>
      <svg width="14" height="14" viewBox="0 0 14 14" fill="none" aria-hidden>
        <path d="M1 12C3 6 5 2 8 2s4 2 4 4" stroke="#3d63b8" strokeWidth="2.500" /><path d="M12.500 8v4" stroke="#3d63b8" strokeWidth="2" strokeDasharray="2 1" />
      </svg>
      <span>Model View Options</span>
      <TitleButton $push><b>?</b></TitleButton>
      <TitleButton aria-label="Close">
        <svg width="11" height="11" viewBox="0 0 11 11" stroke="#000" aria-hidden><path d="M0.500 0.500l10 10M10.500 0.500l-10 10" /></svg>
      </TitleButton>
    </TitleBar>
    <Body>
      <ListPane>
        <SearchBox><Icon n="glass" s={14} c="#555" /><input placeholder="Search Model View Combinations" aria-label="Search Model View Combinations" /></SearchBox>
        <ListArea>
          <List>{combos.map((c, i) => <li key={c}><Option $on={i === 0}>{c}</Option></li>)}</List>
          <ListScroll><Chevron dir="up" c="#bbb" w={2} /><Chevron c="#bbb" w={2} /></ListScroll>
        </ListArea>
        <ListButtons>
          <Button $w={88}>New...</Button><Button $w={88}>Delete</Button>
          <ButtonPair>
            <Button $w={43} aria-label="Import"><Icon n="importI" s={18} /></Button>
            <Button $w={43} aria-label="Export"><Icon n="exportI" s={18} /></Button>
          </ButtonPair>
        </ListButtons>
      </ListPane>
      <Splitter><Tri dir="left" /></Splitter>
      <FormPane>
        <NameRow><label htmlFor="combo-name">Name:</label><span>Editable: 1</span></NameRow>
        <TextBox id="combo-name" $h={23} defaultValue="00-Working" />
        <Bars>{bars.map((b, i) => <Bar key={b}><Tri dir={i === 6 ? 'down' : 'right'} />{b}</Bar>)}</Bars>
        <LibraryPartSettings />
        <Footer><Button $w={88}>Cancel</Button><Button $w={88} $main>OK</Button></Footer>
      </FormPane>
    </Body>
  </Dialog>
);

export default function App() {
  return (
    <Page>
      <Global />
      <MenuBar>
        {['File', 'Edit', 'View', 'Design', 'Document', 'Options', 'Teamwork', 'Window', 'Help'].map((m) => <MenuItem key={m}>{m}</MenuItem>)}
        <WinControls>
          <svg width="36" height="10" viewBox="0 0 36 10" fill="none" stroke="#aaa" strokeWidth="2" aria-hidden>
            <path d="M0 8h8M15 3h5v5h-5zM18 1h4v5M29 2l5 6M34 2l-5 6" />
          </svg>
        </WinControls>
      </MenuBar>
      <ToolBar>
        {tools.map((t, k) =>
          t.sep ? <ToolSep key={k} $w={t.w!} /> : (
            <Tool key={k} $w={t.caret ? 15 : t.w} $on={t.on} $dim={t.dim} aria-label={t.i ?? 'more'}>
              {t.caret ? <Tri dir="down" /> : <Icon n={t.i!} c={planeTint[t.i!]} />}
            </Tool>
          ))}
      </ToolBar>
      <InfoBox>
        <Tiny>Main:</Tiny>
        <InfoTools>
          <InfoTool aria-label="Selection method"><Icon n="nodes" s={16} /><Tri /></InfoTool>
          <InfoTool aria-label="Marquee"><Icon n="marqueeSel" s={17} /><Tri /></InfoTool>
          <InfoTool $on aria-label="Magnet"><Icon n="magnet" s={15} /></InfoTool>
          <InfoTool $big aria-label="Arrow"><Icon n="arrow" s={17} /><Tri /></InfoTool>
        </InfoTools>
      </InfoBox>
      <Middle>
        <ToolBox>
          <ToolList>
            <Handle $w={18} />
            <BoxTool $h={27} $on aria-label="Arrow"><Icon n="arrow" /></BoxTool>
            <BoxTool $h={36} aria-label="Marquee"><Icon n="marquee" /></BoxTool>
            <BoxHead $top={0}>Design</BoxHead>
            {designTools.map((n) => <BoxTool key={n} aria-label={n}><Icon n={n} /></BoxTool>)}
            <BoxHead $top={4}>Viewpoi</BoxHead>
            {viewTools.map((n) => <BoxTool key={n} aria-label={n}><Icon n={n} /></BoxTool>)}
          </ToolList>
          <BoxHead>Docume</BoxHead>
        </ToolBox>
        <Work>
          <Tabs>
            <TabGrid aria-label="Tab overview"><Icon n="views" s={18} /></TabGrid>
            <Tab $on><Icon n="story" /><span>[0. GF-Ground Floor]</span><TabClose aria-label="Close tab"><svg width="8" height="8" viewBox="0 0 8 8" stroke="#222" strokeWidth="2" aria-hidden><path d="M1 1l6 6M7 1L1 7" /></svg></TabClose></Tab>
            <Tab><Icon n="box3d" s={18} /><span>[3D / All]</span></Tab>
            <TabEnd><Icon n="quick" /><Tri dir="down" /></TabEnd>
          </Tabs>
          <Canvas>
            <Plan />
            <Grip $side="left" /><Grip $side="right" /><Grip $side="bottom" />
          </Canvas>
          <QuickBar>
            <ZoomTools><Icon n="zoomBack" s={16} /><Icon n="zoomFwd" s={16} c="#aaa" /><Icon n="zoomIn" s={16} /></ZoomTools>
            {quick.map(([icon, text], k) => <Quick key={k}><Icon n={icon} s={17} /><Grow>{text}</Grow><Tri /></Quick>)}
          </QuickBar>
        </Work>
        <Navigator>
          <Handle $w={68} />
          <NavTools>
            <Tool $w={30} $on aria-label="Project map"><Icon n="home" /></Tool>
            <ToolSep $w={10} />
            <Tool $w={34} aria-label="View map"><Icon n="homeFrame" s={19} /></Tool>
            <Tool $w={28} aria-label="Layout book"><Icon n="layout" s={19} /></Tool>
            <Tool $w={32} aria-label="Publisher"><Icon n="publish" s={18} /></Tool>
            <NavMenu aria-label="Menu"><svg width="13" height="12" stroke="#222" aria-hidden><path d="M0 1.500h13M0 6.500h13M0 11.500h13" /></svg><Tri /></NavMenu>
          </NavTools>
          <NavSearch><SearchBox><Icon n="glass" s={14} c="#555" /><input placeholder="Search Project Map" aria-label="Search Project Map" /></SearchBox></NavSearch>
          <TreeArea>
            <Tree>
              {tree.map(([level, open, icon, text, on], k) => (
                <Row key={k} $level={level} $on={on}>{open ? <Chevron w={2} /> : <i />}<Icon n={icon} s={19} /><span>{text}</span></Row>
              ))}
            </Tree>
            <VScroll><Chevron dir="up" w={2} /><VThumb /><Chevron w={2} /></VScroll>
          </TreeArea>
          <HScroll><Chevron dir="left" w={2} /><HThumb /><Chevron dir="right" w={2} /></HScroll>
          <NavActions>
            <button aria-label="New"><Icon n="plus" c={blue} /></button>
            <button aria-label="Edit"><Icon n="list" c={blue} /></button>
            <button aria-label="Delete"><Icon n="cross" s={18} c="#f0471e" /></button>
          </NavActions>
          <NavHead><Tri dir="down" />Properties</NavHead>
          <NavProp><Icon n="story" s={14} /><span>0.</span><TextBox defaultValue="GF-Ground Floor" /></NavProp>
          <Settings>Settings...</Settings>
        </Navigator>
      </Middle>
      <StatusBar>
        <span>Click an Element or Draw a Selection Area. Press and Hold Ctrl+Shift to Toggle Element/Sub-Element Selection.</span>
        <BrandBox><Icon n="windows" s={18} /><Brand><b>GRAPHISOFT</b> ID</Brand></BrandBox>
      </StatusBar>
      <ModelViewOptions />
      <Pointer width="400" height="64" viewBox="0 0 400 64" fill="none" aria-hidden>
        <path d="M7 19.500H200V7L390 32 200 56V44.500H7z" stroke="#ff8128" strokeWidth="5" strokeLinejoin="miter" strokeMiterlimit="3" />
        <path d="M370 32l20-2.500v5z" fill="#ff8128" stroke="#ff8128" strokeWidth="3" strokeLinejoin="round" />
      </Pointer>
    </Page>
  );
}
